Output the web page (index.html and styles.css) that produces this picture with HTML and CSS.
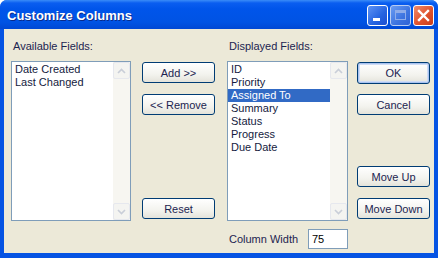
FILE: index.html
```html
<!DOCTYPE html>
<html lang="en">
<head>
  <meta charset="UTF-8">
  <title>Customize Columns</title>
  <link rel="stylesheet" href="styles.css">
</head>
<body>

  <div class="window">
    <div class="titlebar">
      <span class="title">Customize Columns</span>
      <div class="caption-buttons">
        <span class="cap-btn cap-min"><span class="min-bar"></span></span>
        <span class="cap-btn cap-max"><span class="max-box"></span></span>
        <span class="cap-btn cap-close">
          <svg width="13" height="13" viewBox="0 0 13 13"><path d="M2 2 L11 11 M11 2 L2 11" stroke="#fff" stroke-width="2.4" stroke-linecap="square"/></svg>
        </span>
      </div>
    </div>

    <div class="client">
      <div class="col col-list-left">
        <div class="label">Available Fields:</div>
        <div class="listbox">
          <ul class="items">
            <li>Date Created</li>
            <li>Last Changed</li>
          </ul>
          <div class="scrollbar">
            <span class="sb-btn"><svg width="9" height="6" viewBox="0 0 9 6"><path d="M1 5 L4.5 1.5 L8 5" fill="none" stroke="#c9ced8" stroke-width="1.6"/></svg></span>
            <span class="sb-btn"><svg width="9" height="6" viewBox="0 0 9 6"><path d="M1 1 L4.5 4.5 L8 1" fill="none" stroke="#c9ced8" stroke-width="1.6"/></svg></span>
          </div>
        </div>
      </div>

      <div class="col col-buttons">
        <button class="btn">Add &gt;&gt;</button>
        <button class="btn">&lt;&lt; Remove</button>
        <button class="btn btn-bottom">Reset</button>
      </div>

      <div class="col col-list-right">
        <div class="label">Displayed Fields:</div>
        <div class="listbox">
          <ul class="items">
            <li>ID</li>
            <li>Priority</li>
            <li class="selected">Assigned To</li>
            <li>Summary</li>
            <li>Status</li>
            <li>Progress</li>
            <li>Due Date</li>
          </ul>
          <div class="scrollbar">
            <span class="sb-btn"><svg width="9" height="6" viewBox="0 0 9 6"><path d="M1 5 L4.5 1.5 L8 5" fill="none" stroke="#c9ced8" stroke-width="1.6"/></svg></span>
            <span class="sb-btn"><svg width="9" height="6" viewBox="0 0 9 6"><path d="M1 1 L4.5 4.5 L8 1" fill="none" stroke="#c9ced8" stroke-width="1.6"/></svg></span>
          </div>
        </div>
        <div class="width-row">
          <span class="label">Column Width</span>
          <input class="textbox" type="text" value="75">
        </div>
      </div>

      <div class="col col-buttons col-buttons-right">
        <button class="btn btn-default">OK</button>
        <button class="btn">Cancel</button>
        <button class="btn btn-bottom-up">Move Up</button>
        <button class="btn">Move Down</button>
      </div>
    </div>
  </div>

</body>
</html>
```

FILE: styles.css
```css
* {
  box-sizing: border-box;
}

body {
  margin: 0;
  background: #ffffff;
  font-family: "Liberation Sans", Arial, sans-serif;
  font-size: 11px;
}

.window {
  width: 438px;
  height: 258px;
  display: flex;
  flex-direction: column;
  background: #0553e3;
  border-radius: 7px 7px 0 0;
  overflow: hidden;
}

.titlebar {
  height: 29px;
  flex: none;
  display: flex;
  align-items: center;
  justify-content: space-between;
  padding: 0 4px 0 7px;
  background: linear-gradient(#3a8cf8 0px, #0a5ef0 3px, #0055ea 9px, #0053e4 22px, #0048d4 29px);
}

.title {
  color: #fff;
  font-family: "Liberation Sans", Arial, sans-serif;
  font-weight: bold;
  font-size: 13px;
  text-shadow: 1px 1px 0 #0a2a8a;
  padding-top: 1px;
}

.caption-buttons {
  display: flex;
  gap: 2px;
  padding-top: 1px;
}

.cap-btn {
  width: 21px;
  height: 21px;
  border: 1px solid #fff;
  border-radius: 3px;
  display: flex;
  align-items: center;
  justify-content: center;
  position: relative;
}

.cap-min {
  background: linear-gradient(135deg, #5e93f5, #2563e0 60%, #1c4fd0);
}

.min-bar {
  position: absolute;
  left: 5px;
  bottom: 4px;
  width: 7px;
  height: 3px;
  background: #fff;
}

.cap-max {
  background: linear-gradient(135deg, #6a9cf2, #3c73e0 60%, #2f63d6);
  border-color: #b9cdf2;
}

.max-box {
  width: 11px;
  height: 10px;
  border: 1px solid #8eacea;
  border-top-width: 3px;
}

.cap-close {
  background: linear-gradient(135deg, #f08c6c, #e0532e 55%, #c83c1a);
}

.client {
  flex: 1;
  margin: 0 4px 5px 4px;
  background: #ece9d8;
  display: flex;
  align-items: flex-start;
  padding: 11px 0 0 7px;
  color: #1c2450;
}

.col {
  display: flex;
  flex-direction: column;
}

.label {
  height: 13px;
  line-height: 13px;
  margin-bottom: 8px;
  padding-left: 2px;
}

.col-list-left {
  width: 120px;
}

.col-list-right {
  width: 121px;
  margin-left: 12px;
}

.col-buttons {
  width: 73px;
  margin-left: 11px;
  padding-top: 22px;
  height: 179px;
}

.col-buttons-right {
  margin-left: 9px;
}

.listbox {
  height: 160px;
  border: 1px solid #7f9db9;
  background: #fff;
  display: flex;
}

.items {
  list-style: none;
  margin: 0;
  padding: 1px 0 0 0;
  flex: 1;
  color: #141a40;
}

.items li {
  height: 13px;
  line-height: 13px;
  padding-left: 3px;
  white-space: nowrap;
}

.items li.selected {
  background: #316ac5;
  color: #fff;
}

.scrollbar {
  width: 17px;
  background: #f7f6f1;
  display: flex;
  flex-direction: column;
  justify-content: space-between;
}

.sb-btn {
  height: 17px;
  border: 1px solid #e6e8ee;
  border-radius: 2px;
  background: #f4f4f1;
  display: flex;
  align-items: center;
  justify-content: center;
}

.btn {
  width: 73px;
  height: 21px;
  margin-bottom: 11px;
  padding: 0;
  font-family: "Liberation Sans", Arial, sans-serif;
  font-size: 11px;
  color: #1c2450;
  border: 1px solid #003c74;
  border-radius: 3px;
  background: linear-gradient(#ffffff, #f3f3ee 60%, #e4e3da);
  cursor: pointer;
}

.btn-default {
  height: 22px;
  margin-bottom: 10px;
  box-shadow: inset 0 0 0 1px #a9c3f0, inset 0 0 0 2px #cfdcf5;
}

.btn-bottom {
  margin-top: auto;
  margin-bottom: 0;
}

.btn-bottom-up {
  margin-top: auto;
}

.col-buttons-right .btn:last-child {
  margin-bottom: 0;
}

.width-row {
  display: flex;
  align-items: center;
  justify-content: space-between;
  margin-top: 8px;
}

.width-row .label {
  margin: 0;
}

.textbox {
  width: 40px;
  height: 20px;
  border: 1px solid #7f9db9;
  padding: 0 3px;
  font-family: "Liberation Sans", Arial, sans-serif;
  font-size: 11px;
  color: #000;
  background: #fff;
  outline: none;
}
```
